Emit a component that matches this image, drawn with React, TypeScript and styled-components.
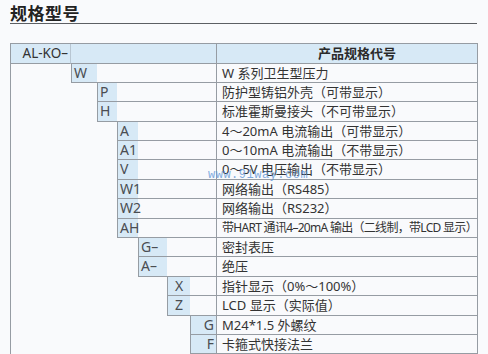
import React from "react";
import styled, { createGlobalStyle } from "styled-components";

const GlobalStyle = createGlobalStyle`
  html, body {
    margin: 0;
    padding: 0;
    background: #f9fafc;
  }
  body {
    font-family: "Noto Sans", "Noto Sans CJK SC", sans-serif;
    color: #333;
  }
`;

type SpecRow = {
  code: string;
  level: number;
  desc: string;
  align?: "left" | "center" | "right";
  tight?: boolean;
};

const rows: SpecRow[] = [
  { code: "W", level: 1, desc: "W 系列卫生型压力" },
  { code: "P", level: 2, desc: "防护型铸铝外壳（可带显示）" },
  { code: "H", level: 2, desc: "标准霍斯曼接头（不可带显示）" },
  { code: "A", level: 3, desc: "4～20mA 电流输出（可带显示）" },
  { code: "A1", level: 3, desc: "0～10mA 电流输出（不带显示）" },
  { code: "V", level: 3, desc: "0～5V 电压输出（不带显示）" },
  { code: "W1", level: 3, desc: "网络输出（RS485）" },
  { code: "W2", level: 3, desc: "网络输出（RS232）" },
  {
    code: "AH",
    level: 3,
    desc: "带HART 通讯4–20mA 输出（二线制，带LCD 显示）",
    tight: true,
  },
  { code: "G–", level: 4, desc: "密封表压" },
  { code: "A–", level: 4, desc: "绝压" },
  { code: "X", level: 5, desc: "指针显示（0%～100%）", align: "center" },
  { code: "Z", level: 5, desc: "LCD 显示（实际值）", align: "center" },
  { code: "G", level: 6, desc: "M24*1.5 外螺纹", align: "right" },
  { code: "F", level: 6, desc: "卡箍式快接法兰", align: "right" },
  { code: "", level: 6, desc: "" },
];

const COLS = "60px 26px 20px 21px 29px 23px 26px 261px";
const LINE = "#969ca3";
const BLUE = "#d7e9f6";

const Page = styled.div`
  width: 488px;
  padding: 4px 0 0 10px;
  box-sizing: border-box;
`;

const Title = styled.h2`
  width: 467px;
  margin: 0;
  padding-bottom: 2px;
  border-bottom: 1px solid #5c5f63;
  font-family: "Noto Sans CJK SC", sans-serif;
  font-size: 17px;
  line-height: 17px;
  font-weight: 700;
  color: #222;
  letter-spacing: 0.5px;
`;

const Table = styled.div`
  position: relative;
  margin-top: 19px;
  width: 468px;
  box-sizing: border-box;
  border: 1px solid ${LINE};
  border-bottom: none;
`;

const Row = styled.div<{ $head?: boolean }>`
  display: grid;
  grid-template-columns: ${COLS};
  height: ${(p) => (p.$head ? "19.5px" : "19.4px")};
`;

const HeadCode = styled.div`
  grid-column: 1 / 2;
  background: ${BLUE};
  border-right: 1px solid #b8c6d2;
  border-bottom: 1px solid ${LINE};
  text-align: right;
  padding-right: 2px;
  font-size: 13.5px;
  line-height: 19px;
  color: #333;
`;

const HeadFill = styled.div`
  grid-column: 2 / 8;
  background: ${BLUE};
  border-bottom: 1px solid ${LINE};
`;

const HeadDesc = styled.div`
  grid-column: 8 / 9;
  background: ${BLUE};
  border-left: 1px solid ${LINE};
  border-bottom: 1px solid ${LINE};
  text-align: center;
  padding-left: 20px;
  font-family: "Noto Sans CJK SC", sans-serif;
  font-size: 13px;
  font-weight: 700;
  line-height: 18px;
  color: #2a2a2a;
`;

const Code = styled.div<{ $col: number; $align: string }>`
  grid-column: ${(p) => `${p.$col} / ${p.$col + 1}`};
  background: ${BLUE};
  border-left: 1px solid ${LINE};
  border-bottom: 1px solid ${LINE};
  text-align: ${(p) => p.$align};
  padding: 0 2px;
  font-size: 14px;
  line-height: 18px;
  color: #4a4d52;
  white-space: nowrap;
`;

const Blank = styled.div<{ $col: number }>`
  grid-column: ${(p) => `${p.$col} / 8`};
  border-bottom: 1px solid ${LINE};
`;

const Desc = styled.div<{ $tight?: boolean }>`
  grid-column: 8 / 9;
  border-left: 1px solid ${LINE};
  border-bottom: 1px solid ${LINE};
  padding-left: 5px;
  font-size: ${(p) => (p.$tight ? "12px" : "13px")};
  letter-spacing: ${(p) => (p.$tight ? "-0.7px" : "0")};
  line-height: 18px;
  color: #333;
  white-space: nowrap;
  overflow: hidden;
`;

const Watermark = styled.div`
  position: absolute;
  left: 197px;
  top: 125px;
  font-family: "Liberation Mono", monospace;
  font-size: 12px;
  line-height: 12px;
  letter-spacing: 0.5px;
  color: #5a92d6;
  opacity: 0.75;
  pointer-events: none;
`;

export default function App() {
  return (
    <>
      <GlobalStyle />
      <Page>
        <Title>规格型号</Title>
        <Table>
          <Row $head>
            <HeadCode>AL-KO–</HeadCode>
            <HeadFill />
            <HeadDesc>产品规格代号</HeadDesc>
          </Row>
          {rows.map((r, i) => {
            const col = r.level + 1;
            return (
              <Row key={i}>
                <Code $col={col} $align={r.align ?? "left"}>
                  {r.code}
                </Code>
                {col < 7 && <Blank $col={col + 1} />}
                <Desc $tight={r.tight}>{r.desc}</Desc>
              </Row>
            );
          })}
          <Watermark>www.91way.com</Watermark>
        </Table>
      </Page>
    </>
  );
}
